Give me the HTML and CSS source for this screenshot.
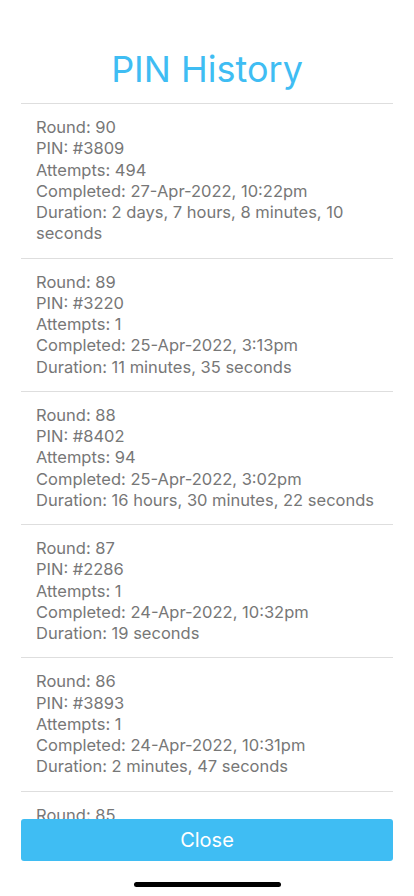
FILE: index.html
```html
<!DOCTYPE html>
<html lang="en">
<head>
  <meta charset="UTF-8" />
  <meta name="viewport" content="width=device-width, initial-scale=1.0"/>
  <title>PIN History</title>
  <link rel="stylesheet" href="styles.css">
</head>
<body>

<div class="screen">
  <h1 class="title">PIN History</h1>

  <div class="history">
    <div class="round">
      <div>Round: 90</div>
      <div>PIN: #3809</div>
      <div>Attempts: 494</div>
      <div>Completed: 27-Apr-2022, 10:22pm</div>
      <div>Duration: 2 days, 7 hours, 8 minutes, 10 seconds</div>
    </div>
    <div class="round">
      <div>Round: 89</div>
      <div>PIN: #3220</div>
      <div>Attempts: 1</div>
      <div>Completed: 25-Apr-2022, 3:13pm</div>
      <div>Duration: 11 minutes, 35 seconds</div>
    </div>
    <div class="round">
      <div>Round: 88</div>
      <div>PIN: #8402</div>
      <div>Attempts: 94</div>
      <div>Completed: 25-Apr-2022, 3:02pm</div>
      <div>Duration: 16 hours, 30 minutes, 22 seconds</div>
    </div>
    <div class="round">
      <div>Round: 87</div>
      <div>PIN: #2286</div>
      <div>Attempts: 1</div>
      <div>Completed: 24-Apr-2022, 10:32pm</div>
      <div>Duration: 19 seconds</div>
    </div>
    <div class="round">
      <div>Round: 86</div>
      <div>PIN: #3893</div>
      <div>Attempts: 1</div>
      <div>Completed: 24-Apr-2022, 10:31pm</div>
      <div>Duration: 2 minutes, 47 seconds</div>
    </div>
    <div class="round">
      <div>Round: 85</div>
    </div>
  </div>

  <div class="footer">
    <button class="close-btn">Close</button>
    <div class="home-bar"></div>
  </div>
</div>

</body>
</html>
```

FILE: styles.css
```css
:root {
  --accent: #3fbdf3;
  --text-color: #777777;
  --line: #dedede;
}
body {
  margin: 0;
  background: #fff;
  font-family: Inter, 'Noto Sans', sans-serif;
}
.screen {
  height: 896px;
  display: flex;
  flex-direction: column;
  overflow: hidden;
}
.title {
  margin: 0;
  height: 103px;
  box-sizing: border-box;
  padding-top: 46px;
  text-align: center;
  font-size: 36px;
  font-weight: 400;
  line-height: 46px;
  color: var(--accent);
}
.history {
  flex: 1;
  overflow: hidden;
  margin: 0 21px;
  border-top: 1px solid var(--line);
}
.round {
  padding: 13px 6px 13px 15px;
  border-bottom: 1px solid var(--line);
  font-size: 16.5px;
  line-height: 21.25px;
  color: var(--text-color);
}
.footer {
  padding: 0 21px;
}
.close-btn {
  display: block;
  width: 100%;
  height: 42px;
  border: none;
  border-radius: 3px;
  background: var(--accent);
  color: #fff;
  font-family: inherit;
  font-size: 20px;
}
.home-bar {
  width: 147px;
  height: 5px;
  margin: 21px auto 9px;
  border-radius: 3px;
  background: #000;
}
```
